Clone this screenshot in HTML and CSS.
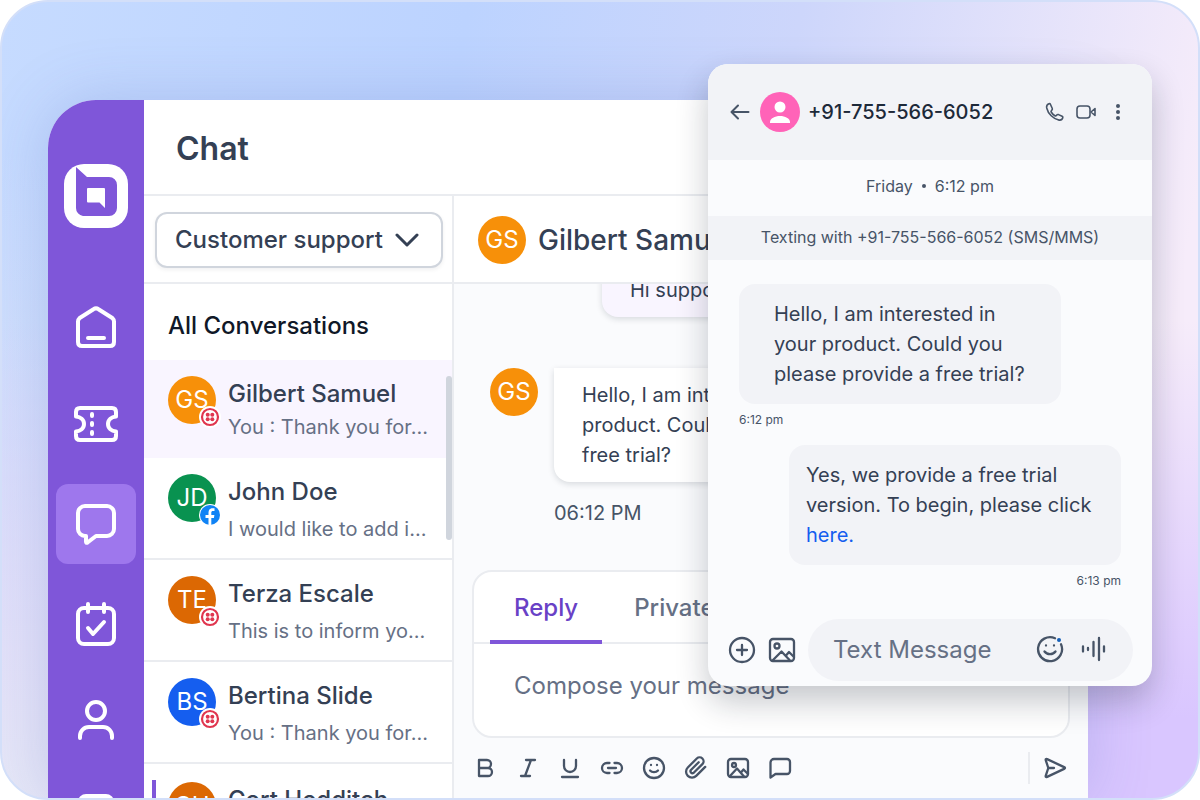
FILE: index.html
```
<!DOCTYPE html>
<html lang="en">

<head>
  <meta charset="UTF-8">
  <meta name="viewport" content="width=device-width, initial-scale=1.0">
  <title>Chat</title>
  <link rel="stylesheet" href="styles.css">
</head>

<body>

  <!-- Shared icons -->
  <svg class="sprite" aria-hidden="true">
    <symbol id="sms" viewBox="0 0 22 22">
      <circle cx="11" cy="11" r="11" fill="#fff" />
      <circle cx="11" cy="11" r="8" fill="none" stroke="#e0364f" stroke-width="2.200" />
      <g fill="#e0364f">
        <circle cx="8.700" cy="8.700" r="2" />
        <circle cx="13.300" cy="8.700" r="2" />
        <circle cx="8.700" cy="13.300" r="2" />
        <circle cx="13.300" cy="13.300" r="2" />
      </g>
    </symbol>
    <symbol id="picture" viewBox="0 0 24 24">
      <rect x="2" y="3" width="20" height="18" rx="3" />
      <circle cx="8" cy="9" r="2" />
      <path d="M4 20l7-7.500 7 8M15 16.500l2.500-3L22 18" />
    </symbol>
  </svg>

  <div class="frame">
    <div class="app">
      <nav class="sidebar">
        <svg class="logo" viewBox="0 0 64 64">
          <rect width="64" height="64" rx="20" fill="#fff" />
          <path d="M12 3l11 10h22a8 8 0 0 1 8 8v23a8 8 0 0 1-8 8H19a8 8 0 0 1-7-8z" fill="#7f56d9" />
          <path d="M24 24h16a1 1 0 0 1 1 1v19l-5.500-5.500H24a1 1 0 0 1-1-1V25a1 1 0 0 1 1-1z" fill="#fff" />
        </svg>
        <a href="#" class="nav-item" aria-label="Home">
          <svg viewBox="0 0 48 48"><path d="M6 21.500c0-1.500.6-2.500 1.700-3.500L21.500 9.200c1.600-1.100 3.400-1.100 5 0L40.300 18c1.100 1 1.700 2 1.700 3.500V42c0 2.500-1.500 4-4 4H10c-2.500 0-4-1.500-4-4zM16 38h16" /></svg>
        </a>
        <a href="#" class="nav-item" aria-label="Tickets">
          <svg viewBox="0 0 48 48"><path d="M4 12c0-2.500 1.500-4 4-4h32c2.500 0 4 1.500 4 4v4.500c-4.500.5-8 3-8 7.500s3.500 7 8 7.500V36c0 2.500-1.500 4-4 4H8c-2.500 0-4-1.500-4-4v-4.500c4.500-.5 8-3 8-7.500s-3.500-7-8-7.500zM20 14v2M20 23v2M20 32v2" /></svg>
        </a>
        <a href="#" class="nav-item active" aria-label="Chat">
          <svg viewBox="0 0 48 48"><path d="M13 6h22a7 7 0 0 1 7 7v16a7 7 0 0 1-7 7H24l-8.500 6.500c-1 .7-1.500.2-1.500-.8V36h-1a7 7 0 0 1-7-7V13a7 7 0 0 1 7-7z" /></svg>
        </a>
        <a href="#" class="nav-item" aria-label="Tasks">
          <svg viewBox="0 0 48 48"><rect x="6" y="8" width="36" height="36" rx="6" /><path d="M16 4v8M32 4v8M16 28l5 6 11-12" /></svg>
        </a>
        <a href="#" class="nav-item" aria-label="Contacts">
          <svg viewBox="0 0 48 48"><circle cx="24" cy="11" r="9" /><path d="M8 38v-2a9 9 0 0 1 9-9h14a9 9 0 0 1 9 9v2" /></svg>
        </a>
        <a href="#" class="nav-item" aria-label="Reports">
          <svg viewBox="0 0 48 48"><rect x="8" y="-4" width="32" height="36" rx="6" /></svg>
        </a>
      </nav>

      <div class="main">
        <header class="title-bar">
          <h1>Chat</h1>
        </header>

        <div class="columns">
          <!-- Conversation list -->
          <section class="list">
            <div class="filter">
              <select aria-label="Team">
                <option>Customer support</option>
              </select>
              <svg class="chevron" viewBox="0 0 24 24"><path d="M2 7l10 10L22 7" /></svg>
            </div>
            <h2>All Conversations</h2>
            <div class="conversations">
              <div class="conversation selected">
                <div class="avatar orange">GS<svg class="badge"><use href="#sms" /></svg></div>
                <div class="summary">
                  <div class="name">Gilbert Samuel</div>
                  <div class="preview">You : Thank you for...</div>
                </div>
              </div>
              <div class="conversation">
                <div class="avatar green">JD
                  <svg class="badge" viewBox="0 0 22 22">
                    <circle cx="11" cy="11" r="11" fill="#fff" />
                    <circle cx="11" cy="11" r="10" fill="#1083f5" />
                    <path d="M9.500 21v-7h-3v-3h3V8.500c0-2.800 1.600-4.300 4.200-4.300h1.800V7h-1.600c-1.100 0-1.600.6-1.600 1.600V11h3.100l-.5 3h-2.600v7z" fill="#fff" />
                  </svg>
                </div>
                <div class="summary">
                  <div class="name">John Doe</div>
                  <div class="preview">I would like to add i...</div>
                </div>
              </div>
              <div class="conversation">
                <div class="avatar brown">TE<svg class="badge"><use href="#sms" /></svg></div>
                <div class="summary">
                  <div class="name">Terza Escale</div>
                  <div class="preview">This is to inform yo...</div>
                </div>
              </div>
              <div class="conversation">
                <div class="avatar blue">BS<svg class="badge"><use href="#sms" /></svg></div>
                <div class="summary">
                  <div class="name">Bertina Slide</div>
                  <div class="preview">You : Thank you for...</div>
                </div>
              </div>
              <div class="conversation unread">
                <div class="avatar brown">CH</div>
                <div class="summary">
                  <div class="name">Cort Hedditch</div>
                </div>
              </div>
              <div class="scrollbar"></div>
            </div>
          </section>

          <!-- Open conversation -->
          <section class="chat">
            <header class="chat-header">
              <div class="avatar orange">GS</div>
              <div class="chat-name">Gilbert Samuel</div>
            </header>
            <div class="thread">
              <div class="bubble sent">Hi support</div>
              <div class="received">
                <div class="avatar orange">GS</div>
                <div>
                  <div class="bubble">Hello, I am interested in your product. Could you please provide a free trial?</div>
                  <div class="time">06:12 PM</div>
                </div>
              </div>
            </div>
            <div class="composer">
              <div class="tabs">
                <button class="tab current">Reply</button>
                <button class="tab">Private note</button>
              </div>
              <input type="text" placeholder="Compose your message" aria-label="Compose your message">
            </div>
            <div class="toolbar">
              <button aria-label="Bold"><svg viewBox="0 0 24 24"><path d="M5 4h8a4 4 0 0 1 0 8H5zM5 12h9a4 4 0 0 1 0 8H5z" /></svg></button>
              <button aria-label="Italic"><svg viewBox="0 0 24 24"><path d="M10 4h9M5 20h9M15 4L9 20" /></svg></button>
              <button aria-label="Underline"><svg viewBox="0 0 24 24"><path d="M6 4v6a6 6 0 0 0 12 0V4M4 21h16" /></svg></button>
              <button aria-label="Link"><svg viewBox="0 0 24 24"><path d="M9.500 7H7a5 5 0 0 0 0 10h2.500M14.500 7H17a5 5 0 0 1 0 10h-2.500M8 12h8" /></svg></button>
              <button aria-label="Emoji"><svg viewBox="0 0 24 24"><circle cx="12" cy="12" r="10" /><path d="M8 14.500c2 2.300 6 2.300 8 0M9 9v.1M15 9v.1" /></svg></button>
              <button aria-label="Attach"><svg viewBox="0 0 24 24"><path d="M21.200 10.900l-9 9a5.900 5.900 0 0 1-8.400-8.400l9-9a3.900 3.900 0 0 1 5.600 5.600l-8.700 8.700a2 2 0 0 1-2.800-2.800l7.800-7.800" /></svg></button>
              <button aria-label="Picture"><svg><use href="#picture" /></svg></button>
              <button aria-label="Canned reply"><svg viewBox="0 0 24 24"><path d="M6 3h13a3 3 0 0 1 3 3v9a3 3 0 0 1-3 3H7.500L2.500 21.500V6.500A3.500 3.500 0 0 1 6 3z" /></svg></button>
              <button class="send" aria-label="Send"><svg viewBox="0 0 24 24"><path d="M11 12H5.500M2.800 4.300c-.4-1.300.2-1.700 1.300-1.200l17 8c1.200.6 1.200 1.200 0 1.800l-17 8c-1.100.5-1.700.1-1.300-1.200L5.300 12z" /></svg></button>
            </div>
          </section>
        </div>
      </div>
    </div>

    <!-- Phone messages window -->
    <section class="phone">
      <header class="phone-header">
        <button aria-label="Back"><svg viewBox="0 0 24 24"><path d="M20.500 12h-17M10 5.500L3.500 12l6.500 6.500" /></svg></button>
        <svg class="person" viewBox="0 0 40 40">
          <circle cx="20" cy="20" r="20" fill="#ff63b8" />
          <circle cx="20" cy="15" r="5.500" fill="#fff" />
          <path d="M10 31v-1c0-3.500 5-6 10-6s10 2.500 10 6v1z" fill="#fff" />
        </svg>
        <div class="phone-number">+91-755-566-6052</div>
        <button aria-label="Call"><svg class="thin" viewBox="0 0 24 24"><path d="M8.500 4.500l1.800 4c.3.800 0 1.400-.8 2-.6.500-.6 1-.3 1.500 1 1.700 2 2.700 3.700 3.700.6.300 1.100.3 1.600-.4.700-.8 1.300-1 2-.7l3.600 1.700c.7.400.9.900.7 1.500-.6 1.900-1.900 2.600-3.700 2.300C11.300 19 6 13.600 4.700 8c-.4-2 .4-3.500 2.200-4.200.8-.3 1.300 0 1.600.7z" /></svg></button>
        <button aria-label="Video"><svg class="thin" viewBox="0 0 24 24"><rect x="3" y="6" width="13" height="12" rx="3" /><path d="M17 12l4-3.500v7z" /></svg></button>
        <button aria-label="More"><svg viewBox="0 0 24 24"><g fill="#475467" stroke="none"><circle cx="12" cy="6" r="2" /><circle cx="12" cy="12" r="2" /><circle cx="12" cy="18" r="2" /></g></svg></button>
      </header>
      <div class="phone-date"><span>Friday</span><i></i><span>6:12 pm</span></div>
      <div class="phone-banner">Texting with +91-755-566-6052 (SMS/MMS)</div>
      <div class="phone-thread">
        <div class="sms in">Hello, I am interested in your product. Could you please provide a free trial?</div>
        <div class="sms-time">6:12 pm</div>
        <div class="sms out">Yes, we provide a free trial version. To begin, please click <a href="#">here.</a></div>
        <div class="sms-time out-time">6:13 pm</div>
      </div>
      <div class="phone-compose">
        <button aria-label="Add"><svg viewBox="0 0 28 28"><circle cx="14" cy="14" r="12" /><path d="M14 9v10M9 14h10" /></svg></button>
        <button aria-label="Picture"><svg viewBox="0 0 28 28"><rect x="2" y="3" width="24" height="22" rx="3" /><circle cx="9" cy="10" r="2.500" /><path d="M5 24l8.500-8.500 8 8.500M18 19.500l3-3.500 4.500 4.500" /></svg></button>
        <div class="phone-field">
          <input type="text" placeholder="Text Message" aria-label="Text Message">
          <button aria-label="Emoji"><svg viewBox="0 0 28 28"><path d="M19 3.200a12 12 0 1 0 6 6" /><path d="M8.500 16.500c2.500 3.500 8.500 3.500 11 0M10 10.500v.1M18 10.500v.1" /><circle cx="23" cy="5" r="2" fill="#155fb8" stroke="none" /></svg></button>
          <button aria-label="Voice message"><svg viewBox="0 0 28 28"><path d="M3 11.500v5M8 13v2M13.500 7v14M19 3v22M24 11.500v5" /></svg></button>
        </div>
      </div>
    </section>
  </div>

</body>

</html>
```
FILE: styles.css
```
* {
  box-sizing: border-box;
}

body {
  margin: 0;
  background: #fff;
  font-family: Inter, "Liberation Sans", sans-serif;
  color: #344054;
}

h1, h2 {
  margin: 0;
}

button {
  padding: 0;
  border: none;
  background: none;
  font: inherit;
  color: inherit;
  cursor: pointer;
}

input {
  min-width: 0;
  padding: 0;
  border: none;
  outline: none;
  background: none;
  font: inherit;
  font-size: 24px;
  color: #344054;
}

input::placeholder {
  color: #667085;
  opacity: 1;
}

svg {
  display: block;
  fill: none;
  stroke: #475467;
  stroke-width: 2;
  stroke-linecap: round;
  stroke-linejoin: round;
}

.sprite {
  position: absolute;
  width: 0;
  height: 0;
}

.logo, .badge, .person {
  stroke: none;
}

/* Rounded gradient backdrop */
.frame {
  position: relative;
  display: flex;
  height: 100vh;
  padding: 98px 110px 0 46px;
  border: 2px solid #d3dff9;
  border-radius: 48px;
  overflow: hidden;
  background:
    radial-gradient(circle at 0% 100%, #e6e8f7 0, rgba(230, 232, 247, 0) 45%),
    linear-gradient(180deg, rgba(214, 196, 255, 0) 40%, #d9c6ff 90%),
    linear-gradient(100deg, #c6dbff 0%, #bcd3ff 35%, #cdd6fb 60%, #f6ecfa 92%);
}

.app {
  display: flex;
  flex: 1;
  min-width: 0;
  border-top-left-radius: 48px;
  box-shadow: 0 0 60px rgba(90, 110, 190, 0.25);
  background: #fff;
}

/* Sidebar */
.sidebar {
  display: flex;
  flex-direction: column;
  align-items: center;
  flex: 0 0 96px;
  gap: 20px;
  padding-top: 64px;
  border-top-left-radius: 48px;
  background: #7f56d9;
  overflow: hidden;
}

.logo {
  flex-shrink: 0;
  width: 64px;
  height: 64px;
  margin-bottom: 36px;
}

.nav-item {
  display: flex;
  flex-shrink: 0;
  align-items: center;
  justify-content: center;
  width: 80px;
  height: 80px;
  border-radius: 12px;
}

.nav-item.active {
  background: #9e77ed;
}

.nav-item svg {
  width: 48px;
  height: 48px;
  overflow: visible;
  stroke: #fff;
  stroke-width: 4;
}

/* Main area */
.main {
  display: flex;
  flex-direction: column;
  flex: 1;
  min-width: 0;
}

.title-bar {
  display: flex;
  align-items: center;
  flex: 0 0 96px;
  padding: 2px 32px 0;
  border-bottom: 2px solid #eaecf0;
}

h1 {
  font-size: 32px;
  font-weight: 600;
}

.columns {
  display: flex;
  flex: 1;
  min-height: 0;
}

/* Conversation list */
.list {
  display: flex;
  flex-direction: column;
  flex: 0 0 310px;
  border-right: 2px solid #eaecf0;
  overflow: hidden;
}

.filter {
  position: relative;
  flex: 0 0 88px;
  padding: 16px 9px 14px 11px;
  border-bottom: 2px solid #eaecf0;
}

.filter select {
  width: 100%;
  height: 56px;
  padding: 0 18px 2px;
  border: 2px solid #d0d5dd;
  border-radius: 12px;
  box-shadow: 0 2px 4px rgba(16, 24, 40, 0.06);
  appearance: none;
  background: #fff;
  font: 500 24px Inter, "Liberation Sans", sans-serif;
  color: #344054;
}

.chevron {
  position: absolute;
  right: 33px;
  top: 32px;
  width: 24px;
  height: 24px;
  stroke: #344054;
  stroke-width: 3;
  pointer-events: none;
}

h2 {
  flex: 0 0 76px;
  padding: 8px 24px 0;
  font-size: 24px;
  font-weight: 500;
  line-height: 68px;
  color: #101828;
}

.conversations {
  position: relative;
}

.conversation {
  display: flex;
  gap: 12px;
  height: 102px;
  padding: 16px 24px;
  border-bottom: 2px solid #eaecf0;
}

.conversation.selected {
  height: 98px;
  border-bottom: none;
  background: #f9f5ff;
}

.conversation.unread {
  position: relative;
  padding-top: 18px;
}

.conversation.unread::before {
  content: "";
  position: absolute;
  left: 8px;
  top: 16px;
  width: 4px;
  height: 70px;
  background: #7f56d9;
}

.scrollbar {
  position: absolute;
  top: 16px;
  right: 0;
  width: 6px;
  height: 164px;
  border-radius: 3px;
  background: #d0d5dd;
}

.avatar {
  position: relative;
  flex: 0 0 48px;
  height: 48px;
  border-radius: 50%;
  font-size: 24px;
  line-height: 48px;
  text-align: center;
  color: #fff;
}

.orange {
  background: #f79009;
}

.green {
  background: #099250;
}

.brown {
  background: #dc6803;
}

.blue {
  background: #155eef;
}

.badge {
  position: absolute;
  right: -5px;
  bottom: -4px;
  width: 22px;
  height: 22px;
}

.summary {
  white-space: nowrap;
}

.name {
  font-size: 24px;
  font-weight: 500;
  line-height: 36px;
}

.preview {
  margin-top: 4px;
  font-size: 20px;
  line-height: 30px;
  color: #667085;
}

.selected .preview {
  margin-top: 0;
}

/* Open conversation */
.chat {
  display: flex;
  flex-direction: column;
  flex: 1;
  min-width: 0;
  background: #fafbfd;
}

.chat-header {
  display: flex;
  align-items: center;
  flex: 0 0 88px;
  gap: 12px;
  padding: 2px 24px 0;
  border-bottom: 2px solid #eaecf0;
  background: #fff;
}

.chat-name {
  font-size: 28px;
  font-weight: 500;
}

.thread {
  display: flex;
  flex-direction: column;
  justify-content: flex-end;
  flex: 1;
  min-height: 0;
  padding: 0 36px 42px;
  overflow: hidden;
}

.bubble {
  width: 410px;
  padding: 12px 28px;
  border-radius: 0 16px 16px 16px;
  box-shadow: 0 2px 6px rgba(16, 24, 40, 0.15);
  background: #fff;
  font-size: 20px;
  line-height: 30px;
}

.bubble.sent {
  align-self: flex-end;
  width: 450px;
  margin-bottom: 51px;
  border-radius: 16px 0 16px 16px;
  background: #f9f5ff;
}

.received {
  display: flex;
  gap: 16px;
}

.time {
  margin-top: 16px;
  font-size: 20px;
  line-height: 30px;
  color: #475467;
}

.composer {
  display: flex;
  flex-direction: column;
  flex: 0 0 168px;
  margin: 0 18px;
  border: 2px solid #eaecf0;
  border-radius: 20px;
  background: #fff;
}

.tabs {
  display: flex;
  gap: 8px;
  height: 72px;
  padding: 0 16px;
  border-bottom: 2px solid #eaecf0;
}

.tab {
  height: 72px;
  padding: 2px 24px 0;
  border-bottom: 4px solid transparent;
  font-size: 24px;
  font-weight: 500;
  color: #667085;
}

.tab.current {
  border-color: #7f56d9;
  color: #6941c6;
}

.composer input {
  height: 82px;
  padding: 0 40px;
}

.toolbar {
  display: flex;
  align-items: center;
  flex: 0 0 60px;
  gap: 18px;
  padding: 0 21px 0 20px;
}

.toolbar svg {
  width: 24px;
  height: 24px;
  stroke-width: 2.3;
}

.send {
  height: 32px;
  margin-left: auto;
  padding-left: 13px;
  border-left: 2px solid #eaecf0;
}

/* Phone messages window */
.phone {
  position: absolute;
  top: 62px;
  right: 46px;
  width: 444px;
  border-radius: 20px;
  box-shadow: 0 16px 32px rgba(16, 24, 40, 0.24);
  overflow: hidden;
  background: #fafbfd;
}

.phone-header {
  display: flex;
  align-items: center;
  gap: 8px;
  height: 96px;
  padding: 0 22px 0 20px;
  background: #f2f3f7;
}

.phone-header button svg {
  width: 24px;
  height: 24px;
}

.phone-header .thin {
  stroke-width: 1.6;
}

.person {
  width: 40px;
  height: 40px;
}

.phone-number {
  flex: 1;
  font-size: 20px;
  font-weight: 500;
  color: #1d2939;
}

.phone-date {
  display: flex;
  align-items: center;
  justify-content: center;
  gap: 9px;
  height: 56px;
  padding-bottom: 4px;
  font-size: 16px;
  color: #475467;
}

.phone-date i {
  width: 4px;
  height: 4px;
  border-radius: 50%;
  background: #475467;
}

.phone-banner {
  height: 44px;
  background: #f2f3f7;
  font-size: 16px;
  line-height: 42px;
  text-align: center;
  color: #475467;
}

.phone-thread {
  display: flex;
  flex-direction: column;
  align-items: flex-start;
  padding: 24px 31px 28px;
}

.sms {
  border-radius: 16px;
  background: #f2f3f7;
  font-size: 20px;
  line-height: 30px;
}

.sms.in {
  width: 322px;
  padding: 15px 32px 15px 35px;
}

.sms.out {
  align-self: flex-end;
  width: 332px;
  margin-top: 15px;
  padding: 15px 17px;
}

.sms a {
  color: #155eef;
  text-decoration: none;
}

.sms-time {
  margin-top: 6px;
  font-size: 12px;
  line-height: 20px;
  color: #475467;
}

.out-time {
  align-self: flex-end;
}

.phone-compose {
  display: flex;
  align-items: center;
  gap: 12px;
  padding: 0 19px 5px 20px;
}

.phone-compose svg {
  width: 28px;
  height: 28px;
  stroke-width: 2.3;
}

.phone-field {
  display: flex;
  align-items: center;
  flex: 1;
  min-width: 0;
  gap: 16px;
  height: 62px;
  padding: 0 25px 2px;
  border-radius: 31px;
  background: #f2f3f7;
}

.phone-field input {
  flex: 1;
}
```
